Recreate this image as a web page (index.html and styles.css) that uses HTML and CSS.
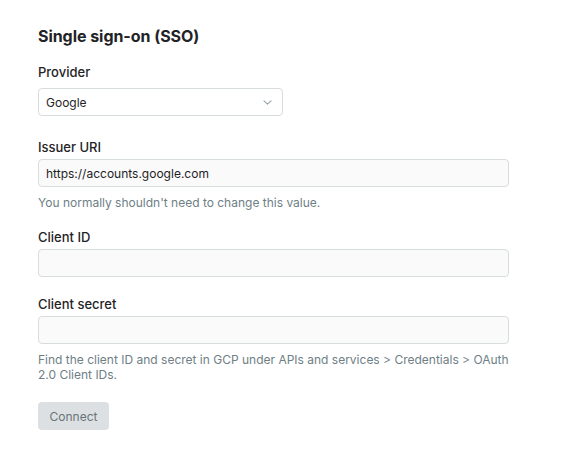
FILE: index.html
```html
<!DOCTYPE html>
<html>
<head>
<meta charset="utf-8">
<link rel="stylesheet" href="styles.css">
</head>
<body>
<div class="page">
  <h1 class="title">Single sign-on (SSO)</h1>
  <div class="field field-select">
    <label class="label">Provider</label>
    <div class="select">
      <span class="select-value">Google</span>
      <svg class="chevron" width="9" height="5" viewBox="0 0 9 5"><path d="M1 0.8l3.5 3.4 3.5-3.4" fill="none" stroke="#9aa3a8" stroke-width="1.1" stroke-linecap="round" stroke-linejoin="round"/></svg>
    </div>
  </div>
  <div class="field">
    <label class="label">Issuer URI</label>
    <div class="input">https://accounts.google.com</div>
    <p class="help">You normally shouldn't need to change this value.</p>
  </div>
  <div class="field">
    <label class="label">Client ID</label>
    <div class="input"></div>
  </div>
  <div class="field">
    <label class="label">Client secret</label>
    <div class="input"></div>
    <p class="help">Find the client ID and secret in GCP under APIs and services &gt; Credentials &gt; OAuth 2.0 Client IDs.</p>
  </div>
  <button class="button">Connect</button>
</div>
</body>
</html>
```

FILE: styles.css
```css
html, body {
  margin: 0;
  padding: 0;
  background: #ffffff;
}
body {
  font-family: Inter, "Noto Sans", sans-serif;
  color: #1f2326;
}
.page {
  padding: 26px 0 0 38px;
  width: 471px;
  display: flex;
  flex-direction: column;
  align-items: flex-start;
}
.title {
  margin: 0 0 18px;
  font-size: 16px;
  line-height: 20px;
  font-weight: 700;
  letter-spacing: -0.05px;
}
.field {
  display: flex;
  flex-direction: column;
  align-self: stretch;
  margin-bottom: 19px;
}
.field-select {
  margin-bottom: 23px;
}
.label {
  font-size: 13px;
  line-height: 16px;
  font-weight: 500;
  margin-bottom: 4px;
}
.field-select .label {
  margin-bottom: 8px;
}
.select {
  width: 245px;
  height: 28px;
  box-sizing: border-box;
  border: 1px solid #d7dcde;
  border-radius: 4px;
  display: flex;
  align-items: center;
  justify-content: space-between;
  padding: 0 10px 0 7px;
  font-size: 12px;
}
.input {
  height: 28px;
  box-sizing: border-box;
  border: 1px solid #d7dcde;
  border-radius: 4px;
  background: #fafafa;
  display: flex;
  align-items: center;
  padding: 0 7px;
  font-size: 12px;
}
.help {
  margin: 8px 0 0;
  font-size: 12px;
  line-height: 15px;
  color: #6e8085;
}
.button {
  margin-top: 1px;
  width: 71px;
  height: 28px;
  border: none;
  border-radius: 4px;
  background: #dce0e2;
  color: #68747a;
  font-family: inherit;
  font-size: 12px;
  padding: 0;
}
```
